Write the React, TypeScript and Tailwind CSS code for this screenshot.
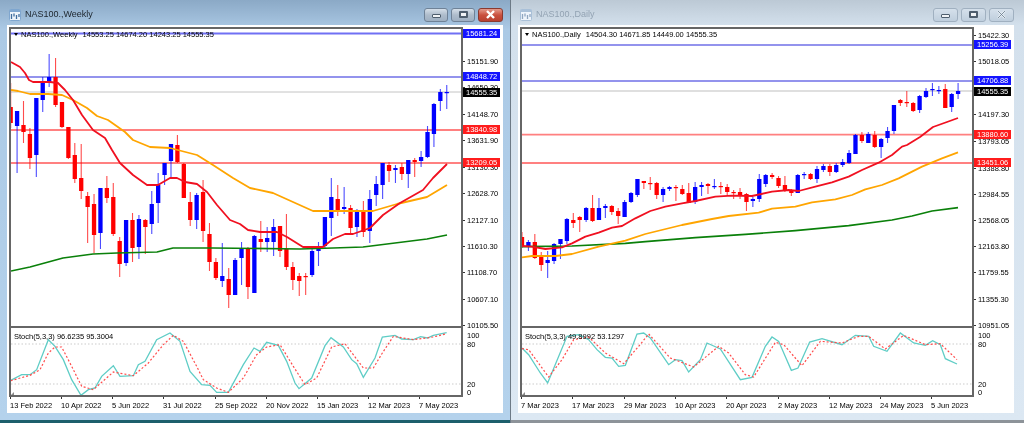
type Candle = [number, number, number, number, number];
type Pt = [number, number];
type AxisLabel = { y: number; text: string; tone?: "blue" | "red" | "black" };
type Level = { y: number; className: string; width: number };

// high, body top, body bottom, low, 1 = blue (up) 0 = red (down)
const weeklyCandles: Candle[] = [
  [83, 107, 123, 128, 0], [111, 111, 126, 173, 1], [101, 125, 132, 143, 0], [128, 134, 158, 169, 0],
  [98, 98, 155, 177, 1], [77, 82, 100, 112, 1], [54, 77, 82, 87, 1], [58, 77, 105, 107, 0],
  [102, 102, 127, 128, 0], [127, 127, 158, 159, 0], [143, 155, 179, 183, 0], [144, 178, 191, 199, 0],
  [192, 196, 207, 243, 0], [194, 204, 235, 253, 0], [188, 188, 233, 249, 1], [176, 188, 198, 203, 0],
  [183, 197, 234, 236, 0], [237, 241, 264, 277, 0], [220, 220, 263, 266, 1], [213, 220, 248, 262, 0],
  [215, 219, 247, 259, 1], [219, 220, 227, 254, 0], [191, 204, 224, 234, 1], [173, 185, 203, 223, 1],
  [163, 163, 175, 185, 1], [144, 144, 161, 177, 1], [135, 145, 162, 163, 0], [163, 164, 198, 198, 0],
  [192, 202, 220, 226, 0], [193, 195, 220, 229, 1], [180, 192, 231, 242, 0], [223, 234, 262, 271, 0],
  [258, 262, 278, 280, 0], [243, 276, 281, 287, 1], [268, 279, 295, 308, 0], [258, 260, 295, 295, 1],
  [242, 248, 258, 285, 1], [247, 249, 287, 299, 0], [235, 236, 293, 293, 1], [221, 239, 242, 252, 0],
  [227, 238, 242, 252, 1], [219, 227, 242, 256, 1], [226, 226, 251, 257, 0], [214, 249, 267, 270, 0],
  [262, 267, 280, 290, 0], [273, 276, 281, 296, 0], [273, 276, 277, 295, 0], [249, 251, 275, 277, 1],
  [242, 246, 251, 266, 1], [217, 217, 246, 249, 1], [178, 197, 218, 236, 1], [185, 199, 210, 216, 0],
  [187, 207, 209, 214, 1], [205, 208, 228, 233, 0], [209, 210, 227, 237, 1], [201, 211, 232, 237, 0],
  [190, 199, 231, 243, 1], [176, 184, 195, 206, 1], [163, 163, 185, 199, 1], [162, 165, 171, 182, 0],
  [165, 168, 170, 183, 1], [163, 167, 174, 180, 0], [160, 160, 174, 188, 1], [158, 160, 162, 177, 0],
  [151, 157, 161, 167, 1], [126, 132, 157, 158, 1], [103, 104, 134, 147, 1], [89, 92, 101, 111, 1],
  [85, 92, 93, 109, 1],
];

const dailyCandles: Candle[] = [
  [232, 237, 247, 248, 0], [240, 242, 247, 251, 1], [234, 242, 258, 259, 0], [252, 257, 265, 271, 0],
  [251, 260, 263, 278, 1], [243, 244, 261, 264, 1], [239, 239, 244, 259, 1], [218, 219, 241, 244, 1],
  [213, 220, 223, 228, 0], [216, 217, 220, 232, 0], [207, 208, 220, 222, 1], [195, 208, 221, 222, 0],
  [198, 208, 220, 220, 1], [204, 206, 208, 218, 1], [205, 206, 212, 215, 0], [208, 211, 216, 224, 0],
  [200, 202, 217, 217, 1], [192, 193, 202, 203, 1], [179, 179, 195, 197, 1], [181, 181, 183, 189, 0],
  [177, 183, 184, 190, 0], [182, 183, 195, 199, 0], [187, 189, 195, 202, 1], [186, 187, 189, 191, 1],
  [185, 187, 188, 201, 0], [185, 189, 194, 195, 0], [183, 193, 203, 203, 0], [182, 187, 202, 204, 1],
  [182, 185, 187, 196, 1], [183, 184, 186, 194, 0], [179, 186, 186.8, 189, 1], [182, 186, 187, 194, 0],
  [184, 187, 192, 195, 0], [190, 192, 193, 199, 0], [188, 192, 195, 199, 0], [193, 194, 202, 211, 0],
  [197, 199, 201, 207, 1], [174, 179, 199, 202, 1], [174, 175, 184, 187, 1], [173, 175, 177, 179, 0],
  [176, 178, 186, 188, 0], [176, 185, 190, 192, 0], [189, 191, 193, 196, 0], [174, 175, 193, 193, 1],
  [172, 174, 175, 179, 1], [173, 174, 179, 180, 0], [166, 169, 179, 183, 1], [164, 166, 170, 172, 1],
  [164, 166, 172, 176, 0], [163, 165, 172, 173, 1], [159, 162, 165, 167, 1], [150, 153, 163, 164, 1],
  [134, 135, 154, 154, 1], [132, 135, 141, 143, 0], [132, 134, 143, 143, 1], [131, 135, 147, 148, 0],
  [138, 139, 147, 158, 1], [127, 131, 138, 143, 1], [105, 105, 131, 134, 1], [99, 100, 103, 106, 0],
  [91, 102, 103, 107, 0], [102, 103, 111, 112, 0], [95, 96, 110, 113, 1], [88, 91, 97, 98, 1],
  [83, 89, 90, 96, 1], [86, 90, 90.8, 94, 1], [84, 89, 108, 108, 0], [93, 94, 107, 112, 1],
  [83, 91, 94, 99, 1],
];

const path = (pts: Pt[]) => pts.map(([x, y]) => `${x},${y}`).join(" ");
// the stoch traces were read off a 3x crop, so map them back to page pixels
const scale = (pts: Pt[], ox: number, oy: number): Pt[] => pts.map(([x, y]) => [ox + x / 3, oy + y / 3]);

const weekly = {
  title: "NAS100.,Weekly",
  ohlc: "14553.25 14674.20 14243.25 14555.35",
  ohlcLeft: "ml-[5px]",
  stoch: "Stoch(5,3,3) 96.6235 95.3004",
  candles: weeklyCandles,
  x0: 10.67,
  originX: 11,
  levels: [
    { y: 33.5, className: "stroke-[#7070f4]", width: 1.8 },
    { y: 77, className: "stroke-[#2828dc]", width: 1.1 },
    { y: 92, className: "stroke-[#c4c4c4]", width: 1 },
    { y: 130, className: "stroke-[#ff8080]", width: 1.8 },
    { y: 163, className: "stroke-[#ff8080]", width: 1.8 },
  ] as Level[],
  red: [[11, 62], [20, 67], [25, 73], [29, 80], [33, 82], [50, 82], [58, 83], [65, 90], [73, 100], [82, 115], [93, 130], [105, 138], [112, 150], [120, 163], [133, 175], [147, 185], [158, 185], [170, 178], [177, 178], [185, 182], [197, 184], [207, 192], [217, 205], [230, 220], [240, 224], [248, 230], [260, 232], [277, 232], [287, 237], [303, 247], [323, 247], [333, 239], [345, 234], [353, 234], [370, 228], [383, 215], [400, 203], [423, 190], [433, 178], [447, 164]] as Pt[],
  orange: [[11, 90], [18, 91], [30, 94], [48, 94], [62, 95], [73, 100], [87, 108], [97, 116], [108, 120], [125, 132], [133, 140], [150, 147], [170, 148], [197, 155], [213, 165], [233, 178], [250, 188], [273, 193], [293, 202], [313, 211], [333, 211], [373, 211], [397, 204], [427, 197], [447, 185]] as Pt[],
  green: [[11, 271], [30, 267], [63, 258], [93, 254], [117, 253], [157, 252], [173, 248], [213, 248], [300, 249], [333, 248], [363, 247], [427, 239], [447, 235]] as Pt[],
  stochMain: scale([[32, 172], [65, 155], [90, 155], [110, 140], [145, 50], [165, 70], [190, 110], [215, 170], [243, 217], [265, 200], [285, 195], [305, 160], [340, 128], [360, 160], [400, 158], [415, 125], [435, 115], [470, 50], [510, 30], [540, 55], [570, 145], [605, 185], [630, 187], [650, 208], [685, 208], [730, 125], [762, 75], [780, 85], [800, 58], [835, 67], [860, 115], [885, 180], [897, 197], [935, 165], [975, 68], [993, 44], [1030, 72], [1055, 110], [1070, 122], [1090, 163], [1125, 105], [1147, 42], [1185, 37], [1205, 48], [1240, 50], [1262, 41], [1282, 45], [1300, 37], [1340, 29]], 0, 323),
  stochSignal: scale([[32, 173], [90, 157], [120, 140], [145, 90], [165, 72], [185, 72], [215, 130], [245, 190], [280, 200], [340, 147], [400, 158], [445, 120], [490, 65], [520, 37], [550, 55], [590, 130], [610, 170], [650, 195], [685, 208], [730, 165], [770, 95], [800, 72], [840, 65], [880, 130], [915, 185], [950, 165], [995, 72], [1035, 62], [1090, 135], [1120, 135], [1147, 90], [1180, 40], [1240, 50], [1300, 42], [1340, 32]], 0, 323),
  axis: [
    { y: 61, text: "15151.90" }, { y: 87, text: "14650.30" }, { y: 114, text: "14148.70" }, { y: 140, text: "13631.90" },
    { y: 167.5, text: "13130.30" }, { y: 193, text: "12628.70" }, { y: 220, text: "12127.10" }, { y: 246, text: "11610.30" },
    { y: 272, text: "11108.70" }, { y: 299, text: "10607.10" }, { y: 325, text: "10105.50" },
    { y: 33.5, text: "15681.24", tone: "blue" }, { y: 76.5, text: "14848.72", tone: "blue" },
    { y: 92.5, text: "14555.35", tone: "black" }, { y: 129.5, text: "13840.98", tone: "red" },
    { y: 162.5, text: "13209.05", tone: "red" },
  ] as AxisLabel[],
  dates: [[10, "13 Feb 2022"], [61, "10 Apr 2022"], [112, "5 Jun 2022"], [163, "31 Jul 2022"], [215, "25 Sep 2022"], [266, "20 Nov 2022"], [317, "15 Jan 2023"], [368, "12 Mar 2023"], [419, "7 May 2023"]] as [number, string][],
};

const daily = {
  title: "NAS100.,Daily",
  ohlc: "14504.30 14671.85 14449.00 14555.35",
  ohlcLeft: "ml-[5px]",
  stoch: "Stoch(5,3,3) 49.8992 53.1297",
  candles: dailyCandles,
  x0: 522,
  originX: 522,
  levels: [
    { y: 45, className: "stroke-[#2828dc]", width: 1.1 },
    { y: 81, className: "stroke-[#2828dc]", width: 1.1 },
    { y: 91, className: "stroke-[#d4d4d4]", width: 1.6 },
    { y: 134.7, className: "stroke-[#ff8080]", width: 1.8 },
    { y: 163, className: "stroke-[#ff8080]", width: 1.8 },
  ] as Level[],
  red: [...scale([[30, 318], [60, 320], [100, 327], [150, 322], [180, 310], [220, 290], [260, 278], [300, 263], [330, 258], [370, 235], [415, 213], [460, 200], [510, 190], [550, 183], [610, 170], [660, 167], [720, 168], [780, 155], [830, 150], [860, 153], [910, 140], [960, 127], [1010, 110], [1050, 90], [1100, 68], [1140, 45], [1170, 20]], 512, 140), [907, 145], [920, 137], [933, 127], [947, 122], [958, 118]] as Pt[],
  orange: scale([[30, 352], [60, 348], [130, 348], [180, 342], [260, 320], [340, 302], [400, 282], [510, 255], [600, 237], [650, 228], [740, 218], [780, 206], [850, 200], [900, 187], [970, 178], [1020, 165], [1060, 148], [1110, 135], [1160, 115], [1230, 80], [1290, 55], [1338, 37]], 512, 140),
  green: scale([[30, 320], [180, 318], [340, 310], [400, 305], [550, 293], [700, 283], [850, 272], [1010, 257], [1140, 240], [1200, 228], [1260, 213], [1338, 203]], 512, 140),
  stochMain: scale([[30, 75], [50, 95], [85, 150], [107, 180], [165, 40], [200, 35], [230, 50], [255, 80], [280, 103], [300, 105], [320, 130], [340, 127], [375, 33], [395, 30], [415, 45], [470, 125], [490, 110], [510, 113], [530, 147], [565, 110], [585, 60], [625, 78], [685, 170], [720, 163], [760, 70], [780, 42], [800, 55], [838, 142], [858, 135], [893, 57], [930, 47], [990, 65], [1030, 37], [1070, 40], [1085, 70], [1125, 85], [1165, 30], [1205, 60], [1240, 67], [1262, 53], [1285, 65], [1300, 107], [1335, 123]], 512, 323),
  stochSignal: scale([[30, 77], [50, 80], [110, 162], [150, 110], [185, 50], [230, 42], [280, 90], [335, 122], [380, 70], [410, 33], [475, 105], [545, 132], [620, 70], [650, 90], [700, 155], [725, 162], [790, 58], [815, 65], [870, 128], [925, 55], [990, 60], [1040, 40], [1070, 40], [1120, 78], [1175, 37], [1240, 65], [1285, 62], [1335, 110]], 512, 323),
  axis: [
    { y: 35, text: "15422.30" }, { y: 61, text: "15018.05" }, { y: 114, text: "14197.30" }, { y: 141, text: "13793.05" },
    { y: 168, text: "13388.80" }, { y: 194, text: "12984.55" }, { y: 220, text: "12568.05" }, { y: 246, text: "12163.80" },
    { y: 272, text: "11759.55" }, { y: 299, text: "11355.30" }, { y: 325, text: "10951.05" },
    { y: 44.5, text: "15256.39", tone: "blue" }, { y: 80.5, text: "14706.88", tone: "blue" },
    { y: 91.5, text: "14555.35", tone: "black" }, { y: 134, text: "13880.60", tone: "red" },
    { y: 162.5, text: "13451.06", tone: "red" },
  ] as AxisLabel[],
  dates: [[521, "7 Mar 2023"], [572, "17 Mar 2023"], [624, "29 Mar 2023"], [675, "10 Apr 2023"], [726, "20 Apr 2023"], [778, "2 May 2023"], [829, "12 May 2023"], [880, "24 May 2023"], [931, "5 Jun 2023"]] as [number, string][],
};

function ChartIcon({ faded }: { faded?: boolean }) {
  const c = faded ? "#a9c0d8" : "#7fa6cf";
  return (
    <svg width="12" height="12" viewBox="0 0 12 12" className="shrink-0">
      <rect x="0.5" y="0.5" width="11" height="11" rx="1" fill="#eef4fb" stroke={c} />
      <rect x="0.5" y="0.5" width="11" height="2.5" fill={c} />
      <path d="M2.5 5v5M5 4.5v3M7.5 6v4M10 5v3" stroke={faded ? "#8fa6c0" : "#3f6d9e"} strokeWidth="1.3" />
    </svg>
  );
}

function WindowButton({ kind, active }: { kind: "min" | "max" | "close"; active: boolean }) {
  const isClose = kind === "close";
  const face =
    isClose && active
      ? "w-[25px] border-[#8a3a30] bg-linear-to-b from-[#e39a8c] via-[#c9503f] to-[#b8402f]"
      : active
        ? "w-[24px] border-[#6f8297] bg-linear-to-b from-[#d5dfe9] via-[#aebccb] to-[#9fb0c2]"
        : "w-[25px] border-[#a0b0c0] bg-linear-to-b from-[#d5e0eb] to-[#bfcedd]";
  return (
    <div className={`flex h-[14px] items-center justify-center rounded-[3px] border ${face}`}>
      {kind === "min" && <span className="mt-[2px] h-[4px] w-[9px] rounded-[1px] border border-[#4e5e6e] bg-[#f0f3f6]" />}
      {kind === "max" && <span className="h-[7px] w-[9px] rounded-[1px] border-2 border-[#4e5e6e] bg-[#f0f3f6]" />}
      {isClose && (
        <svg width="11" height="9" viewBox="0 0 11 9">
          <path d="M2 1l7 7M9 1L2 8" stroke={active ? "#fff" : "#e6edf4"} strokeWidth="2.4" />
          {!active && <path d="M2 1l7 7M9 1L2 8" stroke="#66788a" strokeWidth="0.8" />}
        </svg>
      )}
    </div>
  );
}

function Candles({ data, x0 }: { data: Candle[]; x0: number }) {
  return (
    <>
      {data.map(([high, top, bottom, low, up], i) => {
        const x = x0 + i * 6.413;
        const color = up ? "#0000ff" : "#ff0000";
        return (
          <g key={i}>
            <line x1={x} x2={x} y1={high} y2={low} stroke={color} strokeOpacity={0.7} strokeWidth={1.1} />
            <rect x={x - 2.15} y={top} width={4.3} height={Math.max(bottom - top, 1.2)} fill={color} />
          </g>
        );
      })}
    </>
  );
}

function ChartWindow({ cfg, active }: { cfg: typeof weekly; active: boolean }) {
  return (
    <div
      className={`flex h-[423px] flex-col border-b-[3px] ${
        active
          ? "w-[510px] border-b-[#1d5f6c] bg-linear-to-b from-[#8ba9c6] from-0% via-[#abc9e5] via-[7%] to-[#b4d2ec] pr-[7px] pl-[7px]"
          : "w-[513px] border-b-[#8d9399] bg-linear-to-b from-[#bcc9d5] from-0% via-[#d3e0ec] via-[6%] to-[#dce8f3] pr-[10px] pl-[7px]"
      }`}
    >
      <div className="flex h-[25px] items-center pt-[4px]">
        <div className="ml-[2px] flex items-center gap-[4px]">
          <ChartIcon faded={!active} />
          <span className={`text-[9px] ${active ? "text-[#1c242c]" : "text-[#93a3b3]"}`}>{cfg.title}</span>
        </div>
        <div className="ml-auto flex gap-[3px]">
          <WindowButton kind="min" active={active} />
          <WindowButton kind="max" active={active} />
          <WindowButton kind="close" active={active} />
        </div>
      </div>

      <div className="flex h-[388px] bg-white pt-[2px] pl-[2px]">
        <div className="flex w-[454px] shrink-0 flex-col">
          <div className="relative h-[301px] border-2 border-[#666666]">
            <svg className="block h-full w-full" viewBox={`${cfg.originX} 29 450 297`} preserveAspectRatio="none">
              {cfg.levels.map((l) => (
                <line key={l.y} x1={cfg.originX} x2={cfg.originX + 450} y1={l.y} y2={l.y} className={l.className} strokeWidth={l.width} />
              ))}
              <Candles data={cfg.candles} x0={cfg.x0} />
              <polyline points={path(cfg.green)} fill="none" stroke="#0a800a" strokeWidth={1.7} strokeLinejoin="round" />
              <polyline points={path(cfg.orange)} fill="none" stroke="#ffa500" strokeWidth={1.8} strokeLinejoin="round" />
              <polyline points={path(cfg.red)} fill="none" stroke="#f01020" strokeWidth={1.8} strokeLinejoin="round" />
            </svg>
            <div className="absolute top-[1px] left-[3px] flex items-center text-[7.5px] leading-[9px] text-black">
              <span className="mr-[3px] h-0 w-0 border-x-[2.5px] border-t-[3px] border-x-transparent border-t-black" />
              <span>{cfg.title}</span>
              <span className={cfg.ohlcLeft}>{cfg.ohlc}</span>
            </div>
          </div>

          <div className="relative h-[69px] border-x-2 border-b-2 border-[#666666]">
            <svg className="block h-full w-full" viewBox={`${cfg.originX} 328 450 67`} preserveAspectRatio="none">
              {[344, 384].map((y) => (
                <line key={y} x1={cfg.originX} x2={cfg.originX + 450} y1={y} y2={y} stroke="#cccccc" strokeWidth={1.1} strokeDasharray="1.5 2" />
              ))}
              <polyline points={path(cfg.stochMain)} fill="none" stroke="#5fcdc6" strokeWidth={1.3} />
              <polyline points={path(cfg.stochSignal)} fill="none" stroke="#ff4b4b" strokeWidth={1.2} strokeDasharray="2 2" />
            </svg>
            <span className="absolute top-[4px] left-[3px] text-[7.5px] leading-[9px] text-black">{cfg.stoch}</span>
            <span className="absolute bottom-0 left-0 h-0 w-0 border-t-[3px] border-r-[3px] border-t-transparent border-r-[#8a8a8a]" />
          </div>

          <div className="relative h-[16px] text-[7.5px] leading-[9px] text-black">
            {cfg.dates.map(([x, text]) => (
              <span key={text} className="absolute top-[4px] whitespace-nowrap" style={{ left: x - cfg.originX + 2 }}>
                <span className="absolute -top-[4px] left-0 h-[2px] w-px bg-[#333333]" />
                {text}
              </span>
            ))}
          </div>
        </div>

        <div className="relative flex-1 text-[7.5px] leading-[9px] text-black">
          {cfg.axis.map((a) => (
            <span
              key={a.text + a.y}
              className={`absolute left-0 h-[9px] whitespace-nowrap ${
                a.tone === "blue"
                  ? "w-[37px] bg-[#1414ff] pl-[3px] text-white"
                  : a.tone === "red"
                    ? "w-[37px] bg-[#ff1c1c] pl-[3px] text-white"
                    : a.tone === "black"
                      ? "w-[37px] bg-black pl-[3px] text-white"
                      : "pl-[4px]"
              }`}
              style={{ top: a.y - 27 - 4.5 }}
            >
              {!a.tone && <span className="absolute top-[4px] left-0 h-px w-[2px] bg-[#333333]" />}
              {a.text}
            </span>
          ))}
          {[[335, "100"], [344, "80"], [384, "20"], [392, "0"]].map(([y, text]) => (
            <span key={text} className="absolute left-0 pl-[4px]" style={{ top: Number(y) - 27 - 4.5 }}>
              {text}
            </span>
          ))}
        </div>
      </div>
    </div>
  );
}

export default function App() {
  return (
    <div className="flex h-[423px] w-[1024px] overflow-hidden bg-[#7b8791] font-['Liberation_Sans',Arial,sans-serif] blur-[0.35px]">
      <ChartWindow cfg={weekly} active />
      <div className="w-px bg-[#6d7a86]" />
      <ChartWindow cfg={daily} active={false} />
    </div>
  );
}
